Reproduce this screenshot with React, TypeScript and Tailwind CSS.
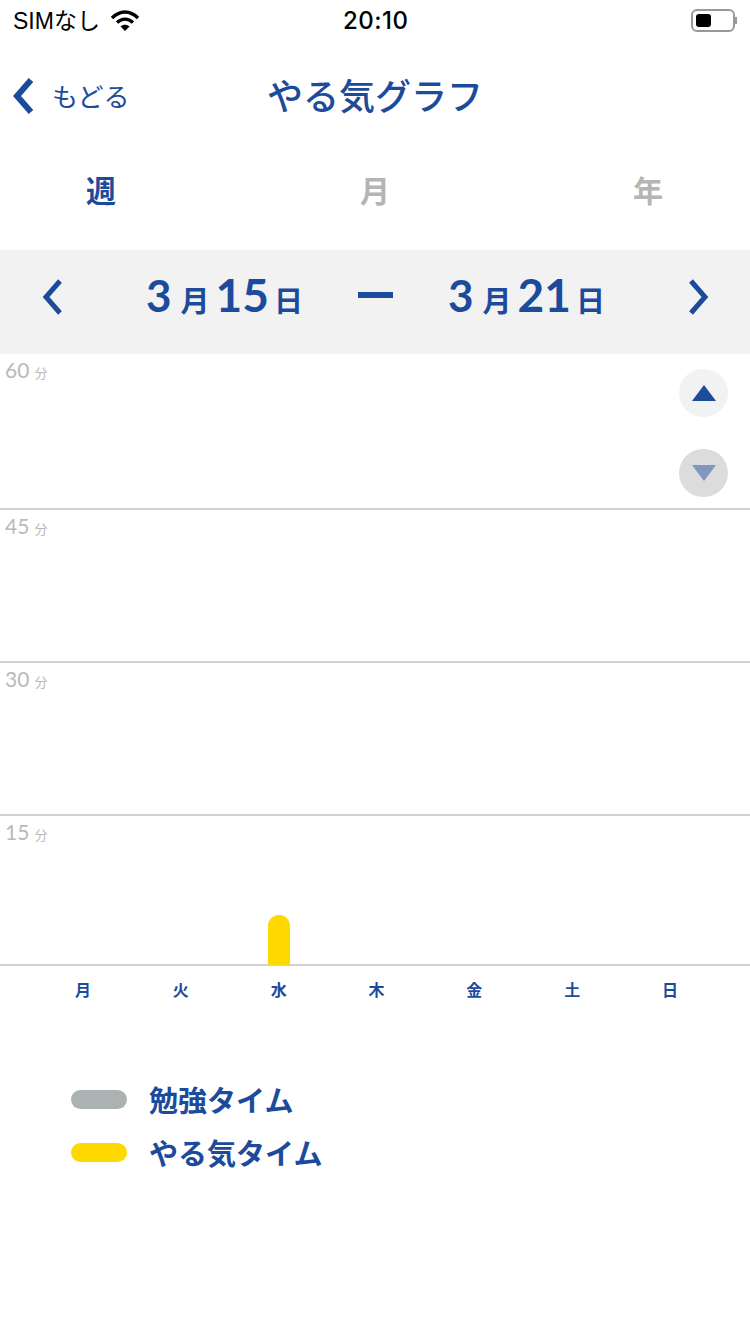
const cjk = "font-['Noto_Sans_CJK_JP',sans-serif]"

const days = ["月", "火", "水", "木", "金", "土", "日"]

const Chevron = ({ dir, className, stroke = 5 }: { dir: "left" | "right"; className: string; stroke?: number }) => (
  <svg viewBox="0 0 24 36" className={className} fill="none" stroke="#1d4b9c" strokeWidth={stroke}>
    <path d={dir === "left" ? "M20 2 L6 18 L20 34" : "M4 2 L18 18 L4 34"} />
  </svg>
)

const GridRow = ({ label, className }: { label: string; className: string }) => (
  <div className={`border-b-2 border-[#d2d2d2] ${className}`}>
    <div className="flex items-baseline pl-[5px] text-[#b9b9b9] leading-none">
      <span className="font-['Lato',sans-serif] text-[21px]">{label}</span>
      <span className={`${cjk} ml-[5px] text-[13px]`}>分</span>
    </div>
  </div>
)

const DatePart = ({ month, day }: { month: string; day: string }) => (
  <div className="flex items-baseline font-bold text-[#1d4b9c] font-['Lato',sans-serif] leading-none">
    <span className="text-[44px]">{month}</span>
    <span className={`${cjk} ml-[9px] text-[29px]`}>月</span>
    <span className="ml-[6px] text-[46px]">{day}</span>
    <span className={`${cjk} ml-[5px] text-[29px]`}>日</span>
  </div>
)

export default function App() {
  return (
    <div className={`w-[750px] h-[1334px] bg-white overflow-hidden ${cjk}`}>
      {/* status bar */}
      <div className="relative flex items-center justify-between h-[40px] pl-[13px] pr-[13px] text-black">
        <div className="flex items-center gap-[10px]">
          <span className="text-[23px] font-['Liberation_Sans',sans-serif] leading-none">
            SIM<span className={cjk}>なし</span>
          </span>
          <svg viewBox="0 0 30 22" className="mt-[2px] w-[30px] h-[22px]" fill="none" stroke="#000" strokeWidth="3.4">
            <path d="M2 8 C10 0 20 0 28 8" />
            <path d="M7 12.5 C12 8 18 8 23 12.5" />
            <path d="M15 21 L10.5 16.5 C13 14 17 14 19.5 16.5 Z" fill="#000" stroke="none" />
          </svg>
        </div>
        <span className="absolute left-[343px] top-[7px] text-[24px] font-medium tracking-[0.5px] font-['Inter',sans-serif] leading-[28px]">20:10</span>
        <div className="flex items-center">
          <div className="w-[44px] h-[23px] rounded-[6px] border-2 border-[#999] p-[3px]">
            <div className="w-[15px] h-full rounded-[3px] bg-black" />
          </div>
          <div className="w-[2px] h-[7px] bg-[#999]" />
        </div>
      </div>

      {/* nav */}
      <div className="relative flex items-center justify-center h-[112px] pb-[5px] text-[#1d4b9c]">
        <div className="absolute left-[11px] top-[38px] flex items-center">
          <Chevron dir="left" stroke={6} className="w-[24px] h-[36px]" />
          <span className="ml-[17px] text-[26px] leading-none">もどる</span>
        </div>
        <span className="text-[36px] font-medium leading-none">やる気グラフ</span>
      </div>

      {/* tabs */}
      <div className="grid grid-cols-3 items-center h-[74px] text-[30px] font-bold leading-none">
        <span className="text-[#1d4b9c] pl-[86px]">週</span>
        <span className="text-[#b5b5b5] text-center">月</span>
        <span className="text-[#b5b5b5] text-right pr-[87px]">年</span>
      </div>

      <div className="h-[24px]" />

      {/* date range */}
      <div className="flex items-center justify-between h-[104px] bg-[#f2f2f3] pb-[12px]">
        <Chevron dir="left" className="ml-[40px] mt-[2px] w-[24px] h-[36px]" />
        <div className="flex items-center -mt-[3px]">
          <DatePart month="3" day="15" />
          <div className="ml-[55px] w-[35px] h-[6px] bg-[#1d4b9c]" />
          <div className="ml-[55px]">
            <DatePart month="3" day="21" />
          </div>
        </div>
        <Chevron dir="right" className="mr-[39px] mt-[2px] w-[24px] h-[36px]" />
      </div>

      {/* chart */}
      <div className="relative">
        <div className="absolute right-[22px] top-[15px] flex flex-col gap-[32px]">
          <div className="flex items-center justify-center w-[49px] h-[48px] rounded-full bg-[#f2f2f3]">
            <div className="w-0 h-0 border-x-[12px] border-x-transparent border-b-[16px] border-b-[#1d4b9c]" />
          </div>
          <div className="flex items-center justify-center w-[49px] h-[48px] rounded-full bg-[#dcdcdd]">
            <div className="w-0 h-0 border-x-[12px] border-x-transparent border-t-[16px] border-t-[#8296c2]" />
          </div>
        </div>

        <GridRow label="60" className="h-[156px] pt-[5px]" />
        <GridRow label="45" className="h-[153px] pt-[5px]" />
        <GridRow label="30" className="h-[153px] pt-[5px]" />
        <div className="flex flex-col h-[150px] border-b-2 border-[#d2d2d2] pt-[5px]">
          <div className="flex items-baseline pl-[5px] text-[#b9b9b9] leading-none">
            <span className="font-['Lato',sans-serif] text-[21px]">15</span>
            <span className={`${cjk} ml-[5px] text-[13px]`}>分</span>
          </div>
          <div className="flex-1 grid grid-cols-7 items-end pl-[34px] pr-[31px]">
            {days.map((d) => (
              <div key={d} className="flex justify-center">
                {d === "水" && <div className="ml-[1px] w-[22px] h-[50px] -mb-[1px] rounded-t-full bg-[#ffd800]" />}
              </div>
            ))}
          </div>
        </div>
        <div className="grid grid-cols-7 pl-[34px] pr-[31px] pt-[13px]">
          {days.map((d) => (
            <span key={d} className="text-center text-[16px] font-bold text-[#1d4b9c] leading-[20px]">{d}</span>
          ))}
        </div>
      </div>

      {/* legend */}
      <div className="flex flex-col gap-[25px] pl-[71px] pt-[86px]">
        <div className="flex items-center">
          <div className="mt-[1px] w-[56px] h-[19px] rounded-full bg-[#acb2b2]" />
          <span className="ml-[22px] text-[29px] font-bold text-[#1d4b9c] leading-[28px]">勉強タイム</span>
        </div>
        <div className="flex items-center">
          <div className="mt-[1px] w-[56px] h-[19px] rounded-full bg-[#ffd800]" />
          <span className="ml-[22px] text-[29px] font-bold text-[#1d4b9c] leading-[28px]">やる気タイム</span>
        </div>
      </div>
    </div>
  )
}
